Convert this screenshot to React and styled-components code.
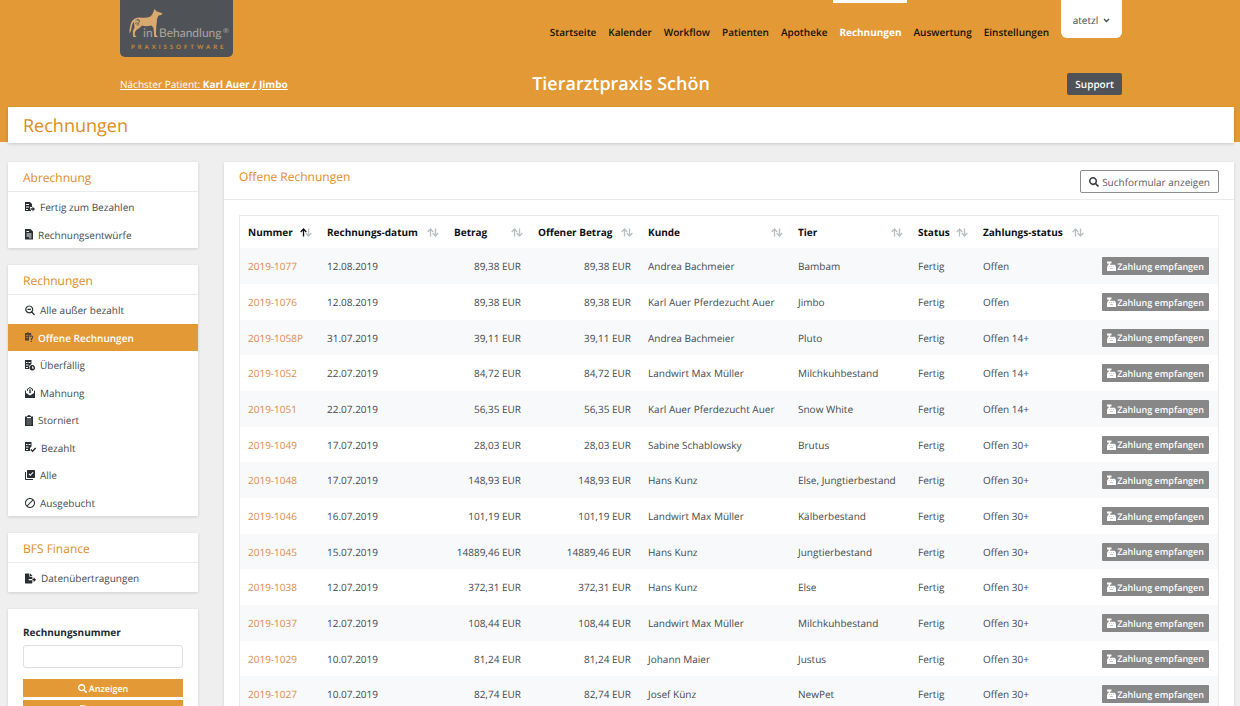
import React from "react"
import styled, { createGlobalStyle, css } from "styled-components"
import { FaSearch, FaFileExport, FaFilePdf } from "react-icons/fa"
import { MdBlock, MdLibraryAddCheck } from "react-icons/md"

const orange = "#e39935"
const orangeText = "#e08c1b"
const slate = "#4f5357"
const textColor = "#454b4f"
const line = "#e9eaeb"

const GlobalStyle = createGlobalStyle`
    * {
        box-sizing: border-box;
    }

    body {
        margin: 0;
        background: #efefef;
        color: ${textColor};
        font-family: "Open Sans", sans-serif;
        font-size: 10px;
        line-height: 16px;
        text-rendering: geometricPrecision;
    }

    button, input {
        font-family: inherit;
        text-rendering: inherit;
    }
`

const Page = styled.div`
    height: 100vh;
    overflow: hidden;
`

const Header = styled.header`
    height: 142px;
    background: ${orange};
`

const HeaderInner = styled.div`
    max-width: 1004px;
    margin: 0 auto;
    padding-left: 2px;
`

const TopBar = styled.div`
    display: flex;
    align-items: flex-start;
    height: 58px;
`

const LogoLink = styled.a`
    display: block;
    width: 113px;
    height: 58px;
    margin-right: auto;
`

const Nav = styled.nav`
    display: flex;
    gap: 12px;
    margin-right: 12px;
`

const NavLink = styled.a`
    position: relative;
    padding-top: 24px;
    color: ${props => props.$active ? "#fff" : "#15120c"};
    font-weight: ${props => props.$active ? 700 : 600};
    text-decoration: none;

    ${props => props.$active && css`
        &::before {
            content: "";
            position: absolute;
            top: 0;
            left: -6px;
            right: -6px;
            height: 3px;
            background: #fff;
        }
    `}
`

const UserButton = styled.button`
    display: flex;
    align-items: center;
    justify-content: center;
    gap: 5px;
    width: 61px;
    height: 38px;
    padding: 2px 0 0;
    border: 0;
    border-radius: 0 0 6px 6px;
    background: #fff;
    color: ${textColor};
    font-size: 10px;
`

const InfoBar = styled.div`
    display: grid;
    grid-template-columns: 1fr auto 1fr;
    align-items: center;
    height: 49px;
    padding-top: 3px;
`

const NextPatient = styled.a`
    color: #fff;
    font-weight: 500;

    strong {
        font-weight: 700;
    }
`

const PracticeName = styled.h1`
    margin: 0;
    color: #fff;
    font-size: 18px;
    line-height: 24px;
    font-weight: 600;
`

const SupportButton = styled.button`
    justify-self: end;
    height: 22px;
    padding: 0 8px;
    border: 0;
    border-radius: 2px;
    background: ${slate};
    color: #fff;
    font-size: 10px;
    font-weight: 600;
`

const TitlePanel = styled.div`
    margin: -35px 6px 0 8px;
    padding: 7px 15px 5px;
    background: #fff;
    box-shadow: 0 1px 3px rgba(0, 0, 0, 0.16);
`

const Title = styled.h2`
    margin: 0;
    color: ${orangeText};
    font-size: 18px;
    line-height: 24px;
    font-weight: 500;
`

const Columns = styled.div`
    display: grid;
    grid-template-columns: 190px minmax(0, 1fr);
    gap: 26px;
    align-items: start;
    padding: 19px 6px 0 8px;
`

const Sidebar = styled.aside`
    display: flex;
    flex-direction: column;
    gap: 17px;
`

const Panel = styled.section`
    background: #fff;
    box-shadow: 0 1px 3px rgba(0, 0, 0, 0.14);
`

const PanelTitle = styled.h3`
    margin: 0;
    padding: 7px 15px 5px;
    border-bottom: 1px solid ${line};
    color: ${orangeText};
    font-size: 12px;
    line-height: 17px;
    font-weight: 500;
`

const MenuList = styled.ul`
    margin: 0;
    padding: 1px 0 0;
    list-style: none;
`

const MenuLink = styled.a`
    display: flex;
    align-items: center;
    gap: 5px;
    height: 28px;
    padding: 0 17px;
    color: ${textColor};
    text-decoration: none;

    li:nth-child(even) > & {
        height: 27px;
    }

    svg {
        flex: none;
        color: #2b2f33;
    }

    ${props => props.$active && css`
        background: ${orange};
        color: #fff;
        font-weight: 600;
    `}
`

const SearchForm = styled.form`
    display: flex;
    flex-direction: column;
    padding: 15px;
`

const FieldLabel = styled.label`
    margin-bottom: 5px;
    color: #1e2a33;
    font-weight: 700;
`

const TextInput = styled.input`
    width: 100%;
    height: 23px;
    margin-bottom: 11px;
    border: 1px solid #dcdee0;
    border-radius: 3px;
`

const WideButton = styled.button`
    display: flex;
    align-items: center;
    justify-content: center;
    gap: 2px;
    height: 18px;
    margin-bottom: 3px;
    border: 0;
    background: ${orange};
    color: #fff;
    font-size: 9px;
    font-weight: 600;
`

const PanelHeader = styled.div`
    display: flex;
    justify-content: space-between;
    align-items: flex-start;
    padding: 8px 15px 6px;
    border-bottom: 1px solid ${line};
`

const ListTitle = styled.h3`
    margin: 0;
    color: ${orangeText};
    font-size: 12px;
    line-height: 14px;
    font-weight: 500;
`

const OutlineButton = styled.button`
    display: flex;
    align-items: center;
    gap: 3px;
    height: 23px;
    padding: 0 8px;
    border: 1px solid #8c8c8c;
    border-radius: 2px;
    background: #fff;
    color: #5a5e61;
    font-size: 10px;

    svg {
        color: #3c4043;
    }
`

const TableWrap = styled.div`
    margin: 15px;
    border: 1px solid ${line};
`

const Table = styled.table`
    width: 100%;
    border-collapse: collapse;
    table-layout: fixed;
`

const HeadCell = styled.th`
    width: ${props => props.$width};
    height: 32px;
    padding: 0 7px 0 8px;
    color: #0e1113;
    text-align: left;
    white-space: nowrap;
`

const HeadContent = styled.div`
    display: flex;
    justify-content: space-between;
    align-items: center;
`

const Row = styled.tr`
    height: 36px;

    &:nth-child(3n) {
        height: 35px;
    }

    &:nth-child(odd) {
        background: #f8f9fb;
    }
`

const Cell = styled.td`
    padding: 0 9px 0 8px;
    text-align: ${props => props.$align || "left"};
    white-space: nowrap;
`

const NumberLink = styled.a`
    color: #e08b4f;
    text-decoration: none;
`

const PayButton = styled.button`
    display: inline-flex;
    align-items: center;
    gap: 1px;
    height: 18px;
    padding: 0 5px;
    border: 0;
    border-radius: 1px;
    background: #878787;
    color: #fff;
    font-size: 9px;
    font-weight: 600;
    vertical-align: middle;
`

const LogoText = styled.text`
    font-family: Lato, sans-serif;
    font-size: ${props => props.$size}px;
    fill: ${props => props.$fill};
`

const Tagline = styled(LogoText)`
    font-weight: 700;
    letter-spacing: 3px;
`

function Logo() {
    return (
        <svg width="113" height="58" viewBox="0 0 113 58" role="img" aria-label="inBehandlung Praxissoftware">
            <path d="M0 0H113V52a5 5 0 0 1-5 5H5a5 5 0 0 1-5-5Z" fill={slate} />
            <path
                d="M34.500 9L36.500 11.300 38.500 12 42.300 13.200 42 14.600 38.300 15.700Q36.700 18.500 36.800 22.500L36.200 27 36 34.800 38 37H34.300L33.500 28 31.500 25.500Q26 26.800 22 25.600L19.500 28Q16 29.500 15 32L14.700 35 16.700 37H13.200L12.800 31 14.500 27.500 14 21.800Q12.300 23.500 11.800 26.500 11.300 31 9.500 33.500 9.200 30 10.200 26 11.200 20 15.500 18.200 18 17.300 22 17.700 27 18 30.500 16.500 33.200 13.500 33.700 11Z"
                fill="#d9a970"
            />
            <path d="M15.500 20.500c2-1.500 4.500-1 4 1s-3 2-2.500 4M15 23.500c2.500-1.500 4.500-.5 3.500 2M17 19.500l3 2" fill="none" stroke={slate} strokeWidth="0.7" />
            <LogoText x="23" y="37" $size={12} $fill="#aaa59f">in</LogoText>
            <LogoText x="39" y="37" $size={12} $fill="#aaa59f">Behandlung</LogoText>
            <LogoText x="103" y="33" $size={7} $fill="#aaa59f">®</LogoText>
            <Tagline x="11" y="49" $size={6} $fill="#c98a38">PRAXISSOFTWARE</Tagline>
        </svg>
    )
}

function SheetIcon({ width = 10, children }) {
    return (
        <svg width={width} height="11" viewBox={`0 0 ${width} 11`} fill="currentColor" fillRule="evenodd" aria-hidden="true">
            {children}
        </svg>
    )
}

const ReadyIcon = () => (
    <SheetIcon>
        <path d="M0 0h5l2 2v3H5v3h1v1H0zM1 2v1h3V2zm0 2.500v1h3v-1zM1 7v1h2V7z" />
        <path d="M5.500 6.200H7.500V4.500L10 7 7.500 9.500V7.800H5.500z" />
    </SheetIcon>
)

const DraftIcon = () => (
    <SheetIcon width={8}>
        <path d="M0 0h5.500L8 2.500V10.500H0zM1.500 2v1H4V2zm0 2.500v1h5v-1zm0 2v1h5v-1zM4 8.500v.8h2.500v-.8z" />
    </SheetIcon>
)

const OpenIcon = () => (
    <SheetIcon width={8}>
        <g opacity="0.8">
            <path d="M0 1h2l1-1 1 1h2.200v2.500H4V8.500H0zM1.200 3v.7h2V3zm0 2v.7h2V5z" />
            <path d="M4.800 5.200q.2-1.200 1.500-1.200T7.700 5.200q0 1-1.300 1.700V8" fill="none" stroke="currentColor" strokeWidth="1.200" />
            <path d="M5.800 8.800H7V10H5.800z" />
        </g>
    </SheetIcon>
)

const OverdueIcon = () => (
    <SheetIcon>
        <path d="M0 0h6.500v4L4 6v3H0zM1 2v1h1.500V2zm2.500 0v1h2V2zM1 4.500v1h2.500v-1zM1 7v1h2V7z" />
        <path d="M7.200 5a2.800 2.800 0 1 0 .1 0zM7 6.300h.8v1.300H9v.8H7z" />
    </SheetIcon>
)

const ReminderIcon = () => (
    <SheetIcon>
        <path d="M0 4l1-.8V6l4 2.500L9 6V3.200l1 .8v7H0z" />
        <path d="M2 4V2l3-2 3 2v2h-.8V2.500L5 1 2.800 2.500V4z" />
        <path d="M6.200 3H4.500v1.300h1.200v1.300H4M5 2.300v4" fill="none" stroke="currentColor" strokeWidth="0.700" />
    </SheetIcon>
)

const CancelledIcon = () => (
    <SheetIcon width={8}>
        <path d="M0 1.500h2Q2.500 0 4 0t2 1.500h2V11H0zM2 2v1.200h4V2z" />
        <path d="M1.500 5h5M1.500 7h5M1.500 9h5" stroke="#fff" strokeWidth="0.400" />
    </SheetIcon>
)

const PaidIcon = () => (
    <SheetIcon width={11}>
        <path d="M0 0h6.500v4.500L5 6v3H0zM1 2v1h1.500V2zm2.500 0v1h2V2zM1 4.500v1h2.500v-1zM1 7v1h2V7z" />
        <path d="M5.800 7.500l1.700 1.700L10.700 6" fill="none" stroke="currentColor" strokeWidth="1.400" />
    </SheetIcon>
)

const ZoomOutIcon = () => (
    <SheetIcon>
        <path d="M4.200 1a3.400 3.400 0 1 0 .1 0M6.800 7L9.500 10M2.500 4.400h3.500" fill="none" stroke="currentColor" strokeWidth="1.200" />
    </SheetIcon>
)

function RegisterIcon() {
    return (
        <svg width="9" height="10" viewBox="0 0 9 10" fill="currentColor" fillRule="evenodd" aria-hidden="true">
            <path d="M0 .5h4.500v2H3v1.200h5L9 6v4H0V6l1-2.300h.7V2.500H0zM2.200 5v.6h.8V5zm1.900 0v.6h.8V5zm1.900 0v.6h.8V5zM3 7.200v.6h3v-.6z" />
        </svg>
    )
}

function SortIcon({ active }) {
    return (
        <svg width="12" height="9" viewBox="0 0 12 9" fill="none" strokeWidth="1.300" aria-hidden="true">
            <path d="M3.500 8.500V1M0.700 4L3.500 1l2.800 3" stroke={active ? "#0e1113" : "#b9bec2"} />
            <path d="M8.500 0.500V8M5.700 5l2.800 3 2.800-3" stroke="#b9bec2" />
        </svg>
    )
}

function Chevron() {
    return (
        <svg width="7" height="5" viewBox="0 0 7 5" fill="none" stroke="currentColor" strokeWidth="1.300" aria-hidden="true">
            <path d="M1 1l2.500 2.500L6 1" />
        </svg>
    )
}

const navItems = ["Startseite", "Kalender", "Workflow", "Patienten", "Apotheke", "Rechnungen", "Auswertung", "Einstellungen"]

const menus = [
    {
        title: "Abrechnung",
        items: [
            { label: "Fertig zum Bezahlen", icon: <ReadyIcon /> },
            { label: "Rechnungsentwürfe", icon: <DraftIcon /> }
        ]
    },
    {
        title: "Rechnungen",
        items: [
            { label: "Alle außer bezahlt", icon: <ZoomOutIcon /> },
            { label: "Offene Rechnungen", icon: <OpenIcon />, active: true },
            { label: "Überfällig", icon: <OverdueIcon /> },
            { label: "Mahnung", icon: <ReminderIcon /> },
            { label: "Storniert", icon: <CancelledIcon /> },
            { label: "Bezahlt", icon: <PaidIcon /> },
            { label: "Alle", icon: <MdLibraryAddCheck size={10} viewBox="2 2 20 20" /> },
            { label: "Ausgebucht", icon: <MdBlock size={10} viewBox="2 2 20 20" /> }
        ]
    },
    {
        title: "BFS Finance",
        items: [
            { label: "Datenübertragungen", icon: <FaFileExport size={11} /> }
        ]
    }
]

const columns = [
    { label: "Nummer", width: "79px", sorted: true },
    { label: "Rechnungs-datum", width: "127px" },
    { label: "Betrag", width: "84px" },
    { label: "Offener Betrag", width: "110px" },
    { label: "Kunde", width: "auto" },
    { label: "Tier", width: "120px" },
    { label: "Status", width: "65px" },
    { label: "Zahlungs-status", width: "116px" }
]

const invoices = [
    ["2019-1077", "12.08.2019", "89,38 EUR", "Andrea Bachmeier", "Bambam", "Offen"],
    ["2019-1076", "12.08.2019", "89,38 EUR", "Karl Auer Pferdezucht Auer", "Jimbo", "Offen"],
    ["2019-1058P", "31.07.2019", "39,11 EUR", "Andrea Bachmeier", "Pluto", "Offen 14+"],
    ["2019-1052", "22.07.2019", "84,72 EUR", "Landwirt Max Müller", "Milchkuhbestand", "Offen 14+"],
    ["2019-1051", "22.07.2019", "56,35 EUR", "Karl Auer Pferdezucht Auer", "Snow White", "Offen 14+"],
    ["2019-1049", "17.07.2019", "28,03 EUR", "Sabine Schablowsky", "Brutus", "Offen 30+"],
    ["2019-1048", "17.07.2019", "148,93 EUR", "Hans Kunz", "Else, Jungtierbestand", "Offen 30+"],
    ["2019-1046", "16.07.2019", "101,19 EUR", "Landwirt Max Müller", "Kälberbestand", "Offen 30+"],
    ["2019-1045", "15.07.2019", "14889,46 EUR", "Hans Kunz", "Jungtierbestand", "Offen 30+"],
    ["2019-1038", "12.07.2019", "372,31 EUR", "Hans Kunz", "Else", "Offen 30+"],
    ["2019-1037", "12.07.2019", "108,44 EUR", "Landwirt Max Müller", "Milchkuhbestand", "Offen 30+"],
    ["2019-1029", "10.07.2019", "81,24 EUR", "Johann Maier", "Justus", "Offen 30+"],
    ["2019-1027", "10.07.2019", "82,74 EUR", "Josef Künz", "NewPet", "Offen 30+"]
]

function SideMenu({ title, items }) {
    return (
        <Panel>
            <PanelTitle>{title}</PanelTitle>
            <MenuList>
                {items.map(item => (
                    <li key={item.label}>
                        <MenuLink href="#" $active={item.active}>
                            {item.icon}
                            {item.label}
                        </MenuLink>
                    </li>
                ))}
            </MenuList>
        </Panel>
    )
}

function InvoiceTable() {
    return (
        <TableWrap>
            <Table>
                <thead>
                    <tr>
                        {columns.map(column => (
                            <HeadCell key={column.label} $width={column.width}>
                                <HeadContent>
                                    {column.label}
                                    <SortIcon active={column.sorted} />
                                </HeadContent>
                            </HeadCell>
                        ))}
                        <HeadCell $width="127px" />
                    </tr>
                </thead>
                <tbody>
                    {invoices.map(([number, date, amount, customer, animal, payment]) => (
                        <Row key={number}>
                            <Cell><NumberLink href="#">{number}</NumberLink></Cell>
                            <Cell>{date}</Cell>
                            <Cell $align="right">{amount}</Cell>
                            <Cell $align="right">{amount}</Cell>
                            <Cell>{customer}</Cell>
                            <Cell>{animal}</Cell>
                            <Cell>Fertig</Cell>
                            <Cell>{payment}</Cell>
                            <Cell $align="right">
                                <PayButton type="button"><RegisterIcon />Zahlung empfangen</PayButton>
                            </Cell>
                        </Row>
                    ))}
                </tbody>
            </Table>
        </TableWrap>
    )
}

export default function App() {
    return (
        <Page>
            <GlobalStyle />
            <Header>
                <HeaderInner>
                    <TopBar>
                        <LogoLink href="#"><Logo /></LogoLink>
                        <Nav>
                            {navItems.map(item => (
                                <NavLink key={item} href="#" $active={item === "Rechnungen"}>{item}</NavLink>
                            ))}
                        </Nav>
                        <UserButton type="button">atetzl <Chevron /></UserButton>
                    </TopBar>
                    <InfoBar>
                        <NextPatient href="#">Nächster Patient: <strong>Karl Auer / Jimbo</strong></NextPatient>
                        <PracticeName>Tierarztpraxis Schön</PracticeName>
                        <SupportButton type="button">Support</SupportButton>
                    </InfoBar>
                </HeaderInner>
            </Header>
            <TitlePanel>
                <Title>Rechnungen</Title>
            </TitlePanel>
            <Columns>
                <Sidebar>
                    {menus.map(menu => <SideMenu key={menu.title} {...menu} />)}
                    <Panel>
                        <SearchForm>
                            <FieldLabel htmlFor="invoice-number">Rechnungsnummer</FieldLabel>
                            <TextInput id="invoice-number" type="text" />
                            <WideButton type="button"><FaSearch size={9} />Anzeigen</WideButton>
                            <WideButton type="button"><FaFilePdf size={9} />Drucken</WideButton>
                        </SearchForm>
                    </Panel>
                </Sidebar>
                <Panel>
                    <PanelHeader>
                        <ListTitle>Offene Rechnungen</ListTitle>
                        <OutlineButton type="button"><FaSearch size={10} />Suchformular anzeigen</OutlineButton>
                    </PanelHeader>
                    <InvoiceTable />
                </Panel>
            </Columns>
        </Page>
    )
}
